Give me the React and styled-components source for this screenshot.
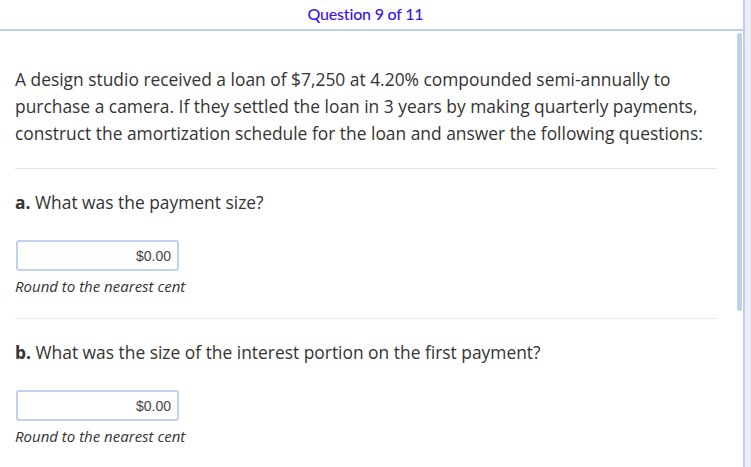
import React from "react";
import styled, { createGlobalStyle } from "styled-components";

const GlobalStyle = createGlobalStyle`
  html, body {
    margin: 0;
    padding: 0;
    background: #eeeef9;
  }
  body {
    font-family: "Open Sans", "DejaVu Sans", sans-serif;
    color: #333;
  }
`;

const Frame = styled.div`
  width: 743px;
  height: 467px;
  background: #fff;
  border-right: 2px solid #bfd1ed;
  display: flex;
  flex-direction: column;
  overflow: hidden;
`;

const Header = styled.div`
  height: 27px;
  padding-bottom: 2px;
  border-bottom: 2px solid #bcd0ec;
  display: flex;
  align-items: center;
  justify-content: center;
  padding-right: 12px;
`;

const Title = styled.div`
  font-family: Lato, "Open Sans", sans-serif;
  font-size: 16px;
  font-weight: 500;
  color: #3a12ee;
  letter-spacing: -0.2px;
`;

const Body = styled.div`
  flex: 1;
  display: flex;
  min-height: 0;
`;

const Content = styled.div`
  flex: 1;
  padding: 35px 20px 0 15px;
`;

const Track = styled.div`
  width: 6px;
  padding-top: 2px;
`;

const Thumb = styled.div`
  width: 5px;
  height: 278px;
  background: #bfd1ed;
  border-radius: 2px;
`;

const Intro = styled.p`
  margin: 0;
  font-size: 17.4px;
  line-height: 27px;
  padding-bottom: 21px;
  border-bottom: 1px solid #e8e8e8;
`;

const Part = styled.section`
  padding: 20px 0 22px;
  border-bottom: ${(p) => (p.last ? "none" : "1px solid #e8e8e8")};
`;

const Prompt = styled.div`
  font-size: 17.4px;
  line-height: 27px;
  margin-bottom: 24px;
`;

const Letter = styled.b`
  font-weight: 700;
`;

const MoneyInput = styled.input`
  display: block;
  box-sizing: border-box;
  width: 163px;
  height: 31px;
  margin-left: 1px;
  border: 2px solid #c0d2ee;
  border-radius: 3px;
  padding: 0 6px 0 4px;
  text-align: right;
  font-family: "Liberation Sans", Arial, sans-serif;
  font-size: 14px;
  color: #444;
  background: #fff;
  outline: none;
  &::placeholder {
    color: #444;
  }
`;

const Hint = styled.div`
  font-style: italic;
  font-size: 15px;
  line-height: 20px;
  margin-top: 5px;
  color: #333;
`;

const parts = [
  { letter: "a.", text: "What was the payment size?" },
  { letter: "b.", text: "What was the size of the interest portion on the first payment?" },
];

export default function App() {
  return (
    <>
      <GlobalStyle />
      <Frame>
        <Header>
          <Title>Question 9 of 11</Title>
        </Header>
        <Body>
          <Content>
            <Intro>
              A design studio received a loan of $7,250 at 4.20% compounded semi-annually to
              purchase a camera. If they settled the loan in 3 years by making quarterly payments,
              construct the amortization schedule for the loan and answer the following questions:
            </Intro>
            {parts.map((p, i) => (
              <Part key={p.letter} last={i === parts.length - 1}>
                <Prompt>
                  <Letter>{p.letter}</Letter> {p.text}
                </Prompt>
                <MoneyInput placeholder="$0.00" />
                <Hint>Round to the nearest cent</Hint>
              </Part>
            ))}
          </Content>
          <Track>
            <Thumb />
          </Track>
        </Body>
      </Frame>
    </>
  );
}
